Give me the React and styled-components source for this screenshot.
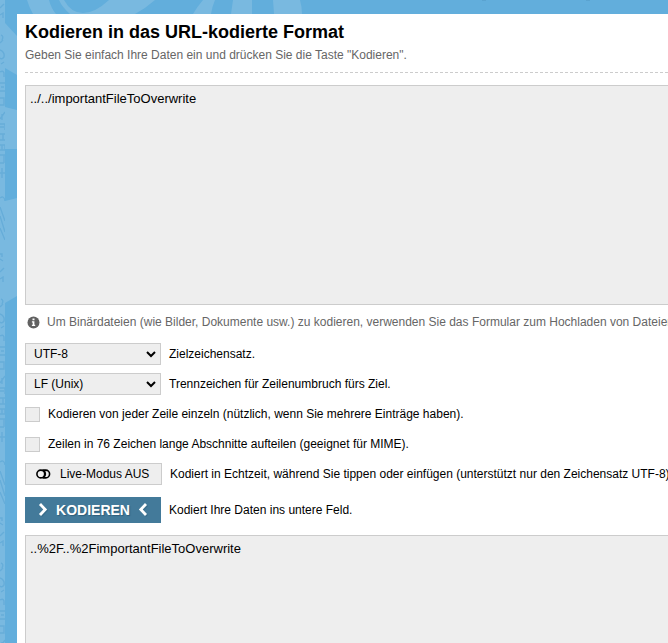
import React, { useState } from "react";
import styled, { createGlobalStyle } from "styled-components";

const GlobalStyle = createGlobalStyle`
  *, *::before, *::after { box-sizing: border-box; }
  html, body { margin: 0; padding: 0; }
  body {
    background: #62aedc;
    color: #000;
    font: 12px/16px "Liberation Sans", Arial, sans-serif;
  }
`;

const Page = styled.div`
  position: relative;
  display: flex;
  min-height: 100vh;
  padding: 14px 0 0 17px;
  overflow: hidden;
`;

const Artwork = styled.svg`
  position: absolute;
  inset: 0;
  width: 100%;
  height: 100%;
`;

const Card = styled.main`
  position: relative;
  display: flex;
  flex-direction: column;
  flex: 1;
  min-width: 0;
  padding: 8px 0 0 8px;
  background: #fff;
  overflow: hidden;
`;

const Header = styled.header`
  padding-bottom: 10px;
  margin-bottom: 12px;
  /* 3px dashes with 2px gaps */
  background: repeating-linear-gradient(90deg, #ccc 0 3px, #fff 3px 5px) left bottom / 100% 1px no-repeat;
`;

const Title = styled.h1`
  margin: 0 0 5px;
  font-size: 18px;
  line-height: 20px;
  font-weight: bold;
`;

const Subtitle = styled.p`
  margin: 0;
  color: #666;
`;

const DataField = styled.textarea`
  display: block;
  width: 100%;
  height: 220px;
  padding: 5px 4px;
  border: 1px solid #ccc;
  border-right: 0;
  border-radius: 0;
  outline: 0;
  resize: none;
  background: #eee;
  color: #000;
  font: 13px/16px "Liberation Sans", Arial, sans-serif;
`;

const ResultField = styled(DataField)`
  flex: 1;
  height: auto;
  min-height: 100px;
  border-bottom: 0;
`;

const Hint = styled.p`
  display: flex;
  align-items: center;
  gap: 7px;
  margin: 9px 0 13px;
  padding-left: 2px;
  color: #666;
  white-space: nowrap;

  svg { flex: none; }
`;

const Options = styled.div`
  display: grid;
  gap: 8px;
`;

const Row = styled.div`
  display: flex;
  align-items: center;
  gap: 8px;
  min-height: 22px;
  white-space: nowrap;
`;

const SubmitRow = styled(Row)`
  margin: 12px 0;
`;

const SelectBox = styled.div`
  display: grid;
  align-items: center;
  width: 136px;

  > * { grid-area: 1 / 1; }
  > svg {
    justify-self: end;
    margin-right: 4px;
    pointer-events: none;
  }
`;

const Select = styled.select`
  appearance: none;
  width: 100%;
  height: 22px;
  padding: 0 20px 0 8px;
  border: 1px solid #ccc;
  border-radius: 0;
  background: #eee;
  color: #000;
  font: inherit;
`;

const Checkbox = styled.input`
  appearance: none;
  flex: none;
  width: 15px;
  height: 15px;
  margin: 0;
  border: 1px solid #ccc;
  background: #eee;

  &:checked { background: #437a9a; }
`;

const LiveButton = styled.button`
  display: flex;
  align-items: center;
  gap: 9px;
  width: 137px;
  height: 22px;
  padding: 0 10px;
  border: 1px solid #ccc;
  background: #eee;
  color: #000;
  font: inherit;
`;

const EncodeButton = styled.button`
  display: flex;
  align-items: center;
  justify-content: center;
  gap: 6px;
  width: 136px;
  height: 26px;
  padding: 0;
  border: 0;
  background: #437a9a;
  color: #fff;
  font: bold 14px/16px "Liberation Sans", Arial, sans-serif;
  text-shadow: 1px 1px 1px #2f5f7b;
`;

function BackgroundArt() {
  return (
    <Artwork aria-hidden="true">
      <defs>
        <pattern id="engraving" width="6" height="264" patternUnits="userSpaceOnUse">
          <g fill="none" stroke="#66add9" strokeWidth="1.4">
            <path d="M0 8 4 4M0 15l3-2v5M1 35q3 1 1 5M0 43l3-3" />
            <path d="M0 50q5 2 4 7-2 3-4 1M1 64l3-2M0 72q3-2 4 1v4" />
            <path d="M0 83h5M1 87h3M0 91h5M0 98h4v7H0" />
            <path d="M0 119 5 112M2 114v6M0 124h5v6M0 127h4" />
            <path d="M0 134h5M3 134v6M0 140h5M0 145h5v5H0M2 145v5" />
            <path d="M0 155h5M4 155v8M0 163h4M2 168v10M0 173h5" />
            <path d="M0 198q4-3 5 3M0 207l5 14M0 216l5 16M0 228l5 12" />
            <path d="M0 254h2v3M0 259l3 2" />
          </g>
        </pattern>
      </defs>
      <g fill="#79b9e0">
        <path d="M5 23 17 36v39L5 68Z" />
        <path d="M5 107 17 110v39H5Z" />
        <path d="M5 201 17 198v98L5 303Z" />
        <path d="M27 0h22q2 8 7 14H33Q29 7 27 0Z" />
        <path d="M59 0h5q7 13 19 13T109 0h46q-9 8-20 14H70Q62 7 59 0Z" />
        <path d="M203 0h12q-3 7-4 14h-18q4-7 10-14Z" />
        <path d="M233 0h19v14h-21ZM273 0h27q2 7 2 14h-28Z" />
        <path d="M0 0h5v643H0Z" />
      </g>
      <rect width="5" height="100%" fill="url(#engraving)" />
      <path d="M482 0h4M586 0h4" stroke="#5397c3" strokeWidth="1" />
    </Artwork>
  );
}

function InfoIcon() {
  return (
    <svg width="13" height="13" viewBox="0 0 13 13" aria-hidden="true">
      <circle cx="6.5" cy="6.5" r="6" fill="#616161" />
      <path d="M5.5 2.4h2v1.8h-2zM4.9 5.3h2.5v3.5h.8V10H4.9V8.8h.8V6.5h-.8z" fill="#fff" />
    </svg>
  );
}

function SelectArrow() {
  return (
    <svg width="12" height="8" viewBox="0 0 12 8" fill="none" stroke="#000" strokeWidth="2" aria-hidden="true">
      <path d="m2 2 4 4 4-4" />
    </svg>
  );
}

function ToggleIcon() {
  return (
    <svg width="15" height="10" viewBox="0 0 15 10" fill="none" stroke="#000" strokeWidth="1.6" aria-hidden="true">
      <circle cx="4.8" cy="5" r="3.9" />
      <path d="M6.5 1.1h3.2a3.9 3.9 0 0 1 0 7.8H6.5M7.5 1.4a4.4 4.4 0 0 1 0 7.2" />
    </svg>
  );
}

function Chevron({ left }) {
  return (
    <svg width="14" height="16" viewBox="0 0 14 16" fill="none" strokeWidth="2.8" aria-hidden="true">
      <path d={left ? "m11 3-5.2 5.5L11 14" : "m5 3 5.2 5.5L5 14"} stroke="#2f5f7b" opacity=".5" />
      <path d={left ? "M10 2 4.8 7.5 10 13" : "m4 2 5.2 5.5L4 13"} stroke="#fff" />
    </svg>
  );
}

function SelectOption({ id, label, values }) {
  return (
    <Row>
      <SelectBox>
        <Select id={id}>
          {values.map((value) => (
            <option key={value}>{value}</option>
          ))}
        </Select>
        <SelectArrow />
      </SelectBox>
      <label htmlFor={id}>{label}</label>
    </Row>
  );
}

function CheckOption({ id, label }) {
  return (
    <Row>
      <Checkbox id={id} type="checkbox" />
      <label htmlFor={id}>{label}</label>
    </Row>
  );
}

export default function App() {
  const [input, setInput] = useState("../../importantFileToOverwrite");
  const [output, setOutput] = useState("..%2F..%2FimportantFileToOverwrite");

  const encode = (event) => {
    event.preventDefault();
    setOutput(encodeURIComponent(input));
  };

  return (
    <>
      <GlobalStyle />
      <Page>
        <BackgroundArt />
        <Card>
          <Header>
            <Title>Kodieren in das URL-kodierte Format</Title>
            <Subtitle>Geben Sie einfach Ihre Daten ein und drücken Sie die Taste "Kodieren".</Subtitle>
          </Header>
          <form onSubmit={encode}>
            <DataField
              aria-label="Daten"
              spellCheck={false}
              value={input}
              onChange={(event) => setInput(event.target.value)}
            />
            <Hint>
              <InfoIcon />
              Um Binärdateien (wie Bilder, Dokumente usw.) zu kodieren, verwenden Sie das Formular zum Hochladen von Dateien
            </Hint>
            <Options>
              <SelectOption id="charset" label="Zielzeichensatz." values={["UTF-8", "ASCII"]} />
              <SelectOption
                id="separator"
                label="Trennzeichen für Zeilenumbruch fürs Ziel."
                values={["LF (Unix)", "CRLF (Windows)"]}
              />
              <CheckOption id="lines" label="Kodieren von jeder Zeile einzeln (nützlich, wenn Sie mehrere Einträge haben)." />
              <CheckOption id="chunks" label="Zeilen in 76 Zeichen lange Abschnitte aufteilen (geeignet für MIME)." />
              <Row>
                <LiveButton type="button">
                  <ToggleIcon />
                  Live-Modus AUS
                </LiveButton>
                <span>Kodiert in Echtzeit, während Sie tippen oder einfügen (unterstützt nur den Zeichensatz UTF-8).</span>
              </Row>
            </Options>
            <SubmitRow>
              <EncodeButton type="submit">
                <Chevron />
                KODIEREN
                <Chevron left />
              </EncodeButton>
              <span>Kodiert Ihre Daten ins untere Feld.</span>
            </SubmitRow>
          </form>
          <ResultField aria-label="Ergebnis" spellCheck={false} readOnly value={output} />
        </Card>
      </Page>
    </>
  );
}
